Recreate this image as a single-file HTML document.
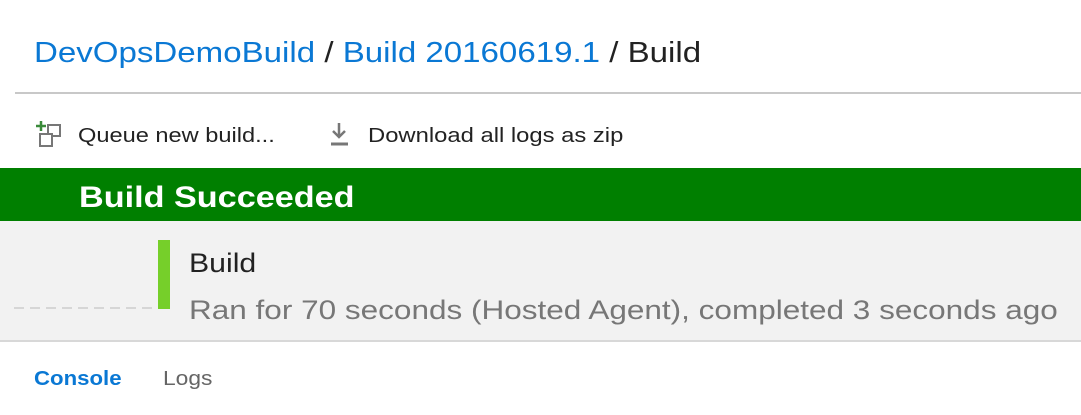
<!DOCTYPE html><html><head><style>
body{margin:0;width:1081px;height:415px;background:#fff;font-family:"Liberation Sans",sans-serif;position:relative;overflow:hidden}
div,span{position:absolute;white-space:nowrap;transform-origin:left center}
</style></head><body>
<div style="left:34px;top:37px;font-size:29px;color:#222;transform:scaleX(1.14)"><span style="position:static;color:#0a78d4">DevOpsDemoBuild</span> / <span style="position:static;color:#0a78d4">Build 20160619.1</span> / Build</div>
<div style="left:15px;top:92px;width:1066px;height:2px;background:#c8c8c8"></div>
<svg style="position:absolute;left:35px;top:120px" width="30" height="30" viewBox="0 0 30 30"><path d="M6 1v10M1 6h10" stroke="#3a8a3a" stroke-width="2.5"/><rect x="13" y="5" width="12" height="11" fill="none" stroke="#777" stroke-width="2"/><rect x="5" y="14" width="12" height="12" fill="#fff" stroke="#777" stroke-width="2"/></svg>
<div style="left:78px;top:125px;font-size:20px;color:#222;transform:scaleX(1.18)">Queue new build...</div>
<svg style="position:absolute;left:330px;top:122px" width="20" height="26" viewBox="0 0 20 26"><path d="M9 1v13M3 9l6 6 6-6" stroke="#777" stroke-width="2.5" fill="none"/><path d="M1 22h17" stroke="#777" stroke-width="3"/></svg>
<div style="left:368px;top:125px;font-size:20px;color:#222;transform:scaleX(1.19)">Download all logs as zip</div>
<div style="left:0;top:168px;width:1081px;height:53px;background:#007f00"></div>
<div style="left:79px;top:181px;font-size:30px;font-weight:bold;color:#fff;transform:scaleX(1.14)">Build Succeeded</div>
<div style="left:0;top:221px;width:1081px;height:119px;background:#f2f2f2;border-bottom:2px solid #d8d8d8"></div>
<div style="left:14px;top:307px;width:140px;height:2px;background:repeating-linear-gradient(90deg,#d6d6d6 0 10px,transparent 10px 16px)"></div>
<div style="left:158px;top:240px;width:12px;height:69px;background:#76cf2a"></div>
<div style="left:189px;top:248px;font-size:27px;color:#222;transform:scaleX(1.12)">Build</div>
<div style="left:189px;top:295px;font-size:27px;color:#777;transform:scaleX(1.167)">Ran for 70 seconds (Hosted Agent), completed 3 seconds ago</div>
<div style="left:34px;top:368px;font-size:20px;font-weight:bold;color:#0a78d4;transform:scaleX(1.11)">Console</div>
<div style="left:163px;top:368px;font-size:20px;color:#666;transform:scaleX(1.14)">Logs</div>
</body></html>
